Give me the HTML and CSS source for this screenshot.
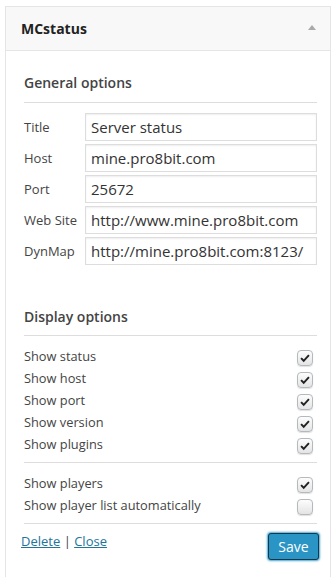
FILE: index.html
```html
<!DOCTYPE html>
<html lang="en">
<head>
  <meta charset="UTF-8" />
  <title>MCstatus widget</title>
  <link rel="stylesheet" href="styles.css">
</head>
<body>

  <div class="widget">
    <div class="widget-top">
      <span class="widget-title">MCstatus</span>
      <span class="widget-arrow"></span>
    </div>

    <div class="widget-inside">
      <h3>General options</h3>

      <div class="field">
        <label>Title</label>
        <input type="text" value="Server status">
      </div>
      <div class="field">
        <label>Host</label>
        <input type="text" value="mine.pro8bit.com">
      </div>
      <div class="field">
        <label>Port</label>
        <input type="text" value="25672">
      </div>
      <div class="field">
        <label>Web Site</label>
        <input type="text" value="http://www.mine.pro8bit.com">
      </div>
      <div class="field">
        <label>DynMap</label>
        <input type="text" value="http://mine.pro8bit.com:8123/">
      </div>

      <h3 class="display">Display options</h3>

      <div class="checks">
        <div class="check-row"><span>Show status</span><span class="box on"><svg viewBox="0 0 16 16"><path d="M3.5 8.2l3 3 6-6.5"/></svg></span></div>
        <div class="check-row"><span>Show host</span><span class="box on"><svg viewBox="0 0 16 16"><path d="M3.5 8.2l3 3 6-6.5"/></svg></span></div>
        <div class="check-row"><span>Show port</span><span class="box on"><svg viewBox="0 0 16 16"><path d="M3.5 8.2l3 3 6-6.5"/></svg></span></div>
        <div class="check-row"><span>Show version</span><span class="box on"><svg viewBox="0 0 16 16"><path d="M3.5 8.2l3 3 6-6.5"/></svg></span></div>
        <div class="check-row"><span>Show plugins</span><span class="box on"><svg viewBox="0 0 16 16"><path d="M3.5 8.2l3 3 6-6.5"/></svg></span></div>
      </div>

      <div class="checks">
        <div class="check-row"><span>Show players</span><span class="box on"><svg viewBox="0 0 16 16"><path d="M3.5 8.2l3 3 6-6.5"/></svg></span></div>
        <div class="check-row"><span>Show player list automatically</span><span class="box"></span></div>
      </div>

      <div class="widget-control">
        <div class="links"><a href="#">Delete</a> | <a href="#">Close</a></div>
        <button class="save">Save</button>
      </div>
    </div>
  </div>

</body>
</html>
```

FILE: styles.css
```css
* {
  box-sizing: border-box;
}
body {
  margin: 0;
  padding: 0;
  background: #fff;
  font-family: 'Open Sans', sans-serif;
  color: #444;
}
.widget {
  margin: 6px 0 0 5px;
  width: 326px;
  border: 1px solid #e5e5e5;
  background: #fff;
  min-height: 600px;
}
.widget-top {
  height: 44px;
  background: #f8f8f8;
  border-bottom: 1px solid #e5e5e5;
  display: flex;
  align-items: center;
  justify-content: space-between;
  padding: 0 14px 0 15px;
}
.widget-title {
  font-size: 14px;
  font-weight: 700;
  color: #222;
}
.widget-arrow {
  width: 0;
  height: 0;
  border-left: 4px solid transparent;
  border-right: 4px solid transparent;
  border-bottom: 5px solid #aaa;
  margin-top: -2px;
}
.widget-inside {
  padding: 0 13px 0 18px;
}
h3 {
  margin: 0;
  font-size: 14px;
  font-weight: 600;
  color: #444;
  height: 52px;
  padding-top: 23px;
  line-height: 18px;
  border-bottom: 1px solid #ddd;
  margin-bottom: 10px;
}
h3.display {
  height: 68px;
  padding-top: 40px;
  margin-bottom: 9px;
}
.field {
  display: flex;
  align-items: center;
  margin-bottom: 3px;
}
.field label {
  width: 61px;
  font-size: 13px;
  color: #444;
}
.field input {
  flex: 1;
  height: 28px;
  margin: 0;
  padding: 0 5px;
  border: 1px solid #ddd;
  font-family: 'Open Sans', sans-serif;
  font-size: 15px;
  color: #333;
  box-shadow: inset 0 1px 2px rgba(0,0,0,0.07);
}
.checks {
  border-bottom: 1px solid #ddd;
  padding-bottom: 7px;
  margin-bottom: 9px;
}
.check-row {
  height: 22px;
  display: flex;
  align-items: center;
  justify-content: space-between;
  font-size: 12.8px;
  color: #444;
  padding-right: 4px;
}
.box {
  width: 16px;
  height: 16px;
  margin-top: 3px;
  border: 1px solid #b4b9be;
  border-radius: 4px;
  background: linear-gradient(#fdfdfd, #e4e4e4);
  box-shadow: 0 1px 1px rgba(0,0,0,0.12);
}
.box svg {
  display: block;
  width: 14px;
  height: 14px;
  fill: none;
  stroke: #222;
  stroke-width: 2.2;
}
.widget-control {
  display: flex;
  justify-content: space-between;
  align-items: flex-start;
  margin-left: -3px;
  margin-top: -1px;
}
.links {
  font-size: 13px;
  color: #444;
  padding-top: 0;
}
.links a {
  color: #21759b;
}
.save {
  width: 51px;
  height: 27px;
  margin-top: 1px;
  margin-right: -2px;
  background: #2a95c5;
  border: 1px solid #0e3950;
  border-radius: 3px;
  color: #fff;
  font-family: 'Open Sans', sans-serif;
  font-size: 14px;
  box-shadow: 0 0 2px 1px rgba(30,140,190,0.8);
  padding: 0;
}
```
